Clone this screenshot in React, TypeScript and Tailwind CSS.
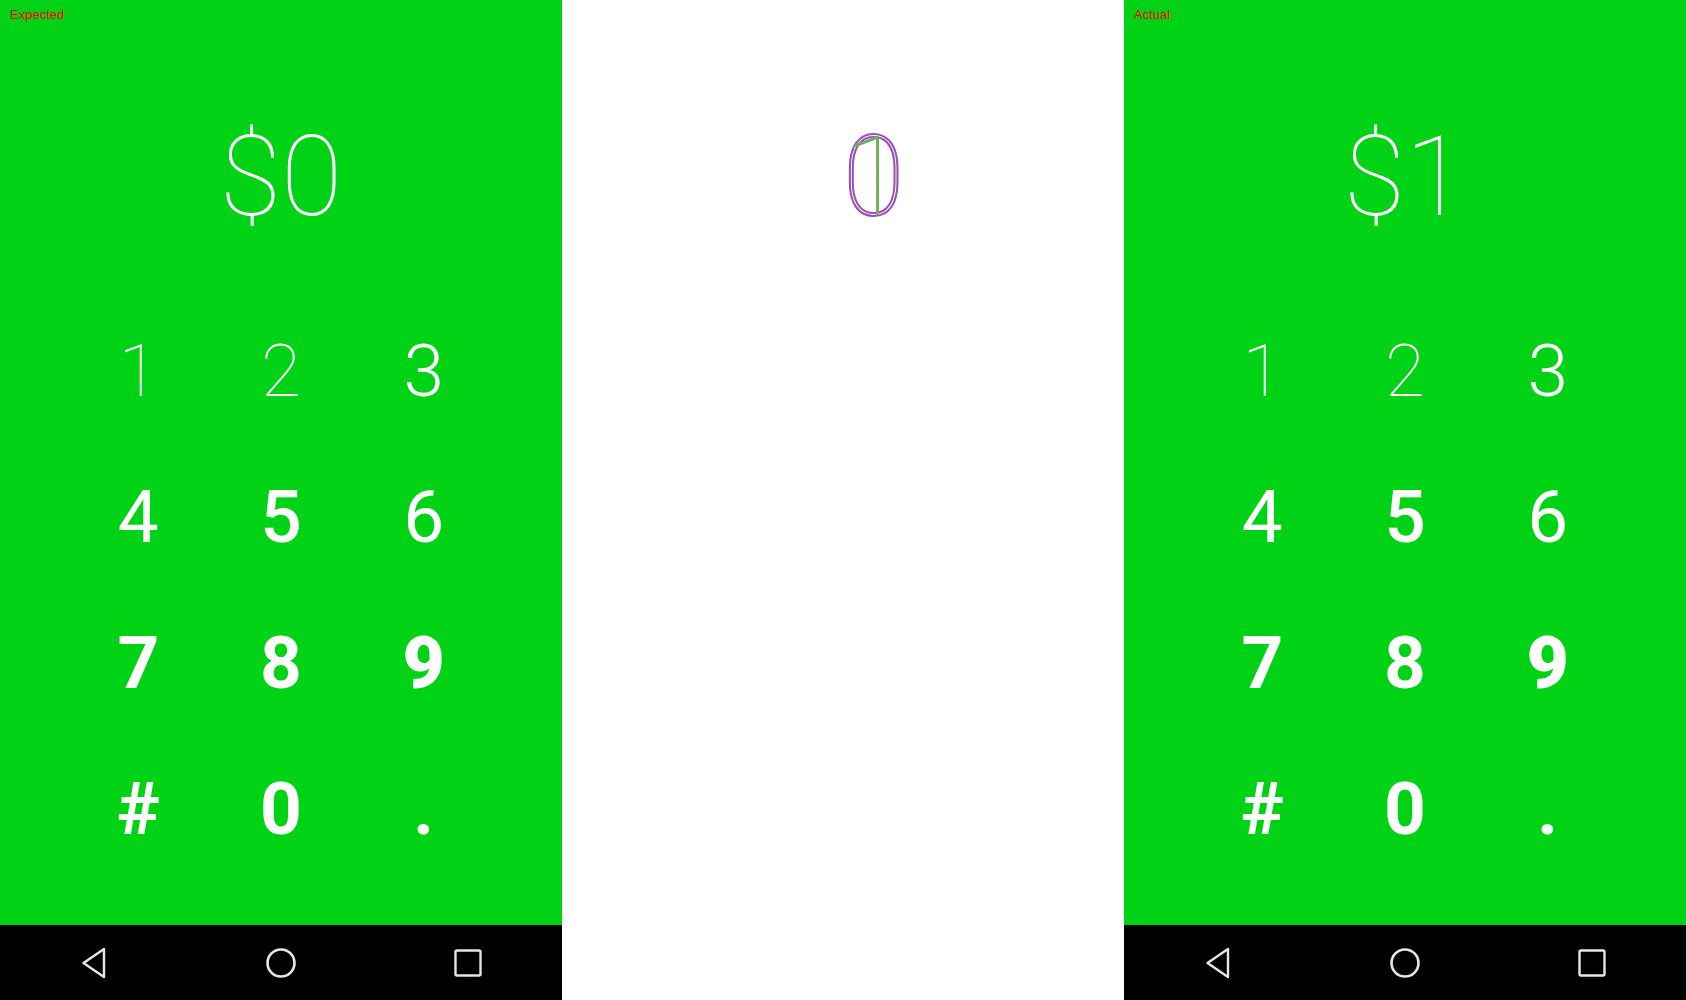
import React from "react";

type Key = { label: string; cls: string };

const keys: Key[] = [
  { label: "1", cls: "font-thin" },
  { label: "2", cls: "font-thin" },
  { label: "3", cls: "font-light" },
  { label: "4", cls: "font-normal" },
  { label: "5", cls: "font-medium" },
  { label: "6", cls: "font-normal" },
  { label: "7", cls: "font-bold" },
  { label: "8", cls: "font-bold" },
  { label: "9", cls: "font-black" },
  { label: "#", cls: "font-bold" },
  { label: "0", cls: "font-bold" },
  { label: ".", cls: "font-bold" },
];

function NavBar() {
  return (
    <div className="h-[75px] bg-black w-full grid grid-cols-3">
      <div className="flex items-center justify-center">
        <svg width="28" height="34" viewBox="0 0 28 34" fill="none">
          <path
            d="M24 3 L24 31 L3.5 17 Z"
            stroke="#e6e6e6"
            strokeWidth="2.4"
            strokeLinejoin="round"
          />
        </svg>
      </div>
      <div className="flex items-center justify-center">
        <svg width="32" height="32" viewBox="0 0 32 32" fill="none">
          <circle cx="16" cy="16" r="13.5" stroke="#e6e6e6" strokeWidth="2.6" />
        </svg>
      </div>
      <div className="flex items-center justify-center">
        <svg width="30" height="30" viewBox="0 0 30 30" fill="none">
          <rect x="2.5" y="2.5" width="25" height="25" rx="1.5" stroke="#e6e6e6" strokeWidth="2.4" />
        </svg>
      </div>
    </div>
  );
}

function Screen({ amount, label }: { amount: string; label: string }) {
  return (
    <div className="relative w-[562px] h-[1000px] bg-[#00d215] flex flex-col font-['Roboto',sans-serif] text-white">
      <div className="absolute left-[10px] top-[6px] text-[13px] leading-[18px] text-[#ff0000] font-['Liberation_Sans',sans-serif]">
        {label}
      </div>
      <div className="h-[925px] w-full flex flex-col">
        <div className="h-[298px] pt-[121px] text-center text-[112px] leading-[112px] font-thin">
          {amount}
        </div>
        <div className="w-[428px] mx-auto grid grid-cols-3">
          {keys.map((k) => (
            <div
              key={k.label}
              className={`h-[146px] text-center text-[73px] leading-[146px] ${k.cls}`}
            >
              {k.label}
            </div>
          ))}
        </div>
      </div>
      <NavBar />
    </div>
  );
}

function Diff() {
  return (
    <div className="relative w-[562px] h-[1000px] bg-white font-['Roboto',sans-serif]">
      <div className="w-full pt-[121px] text-center text-[112px] leading-[112px] font-thin">
        <span className="text-transparent">$</span>
        <span className="relative inline-block">
          <span className="text-transparent [-webkit-text-stroke:2px_#9a4fb5]">0</span>
          <span className="absolute inset-0 text-[#74ac62]">1</span>
        </span>
      </div>
    </div>
  );
}

export default function App() {
  return (
    <div className="flex w-[1686px] h-[1000px] overflow-hidden">
      <Screen amount="$0" label="Expected" />
      <Diff />
      <Screen amount="$1" label="Actual" />
    </div>
  );
}
